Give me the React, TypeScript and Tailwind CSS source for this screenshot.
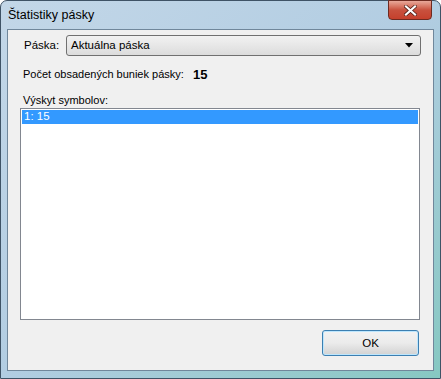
const font = { fontFamily: '"Liberation Sans", Arial, sans-serif' };

export default function App() {
  return (
    <div
      className="w-[441px] h-[379px] overflow-hidden bg-white"
      style={font}
    >
      <div className="relative flex h-full w-full flex-col rounded-t-[7px] border border-[#3f5366] bg-gradient-to-br from-[#c3d7e8] via-[#b2cde2] to-[#86c8c2]">
        {/* title bar */}
        <div className="flex h-[28px] shrink-0 items-center pl-[7px] text-[12.5px] text-black">
          Štatistiky pásky
        </div>

        <div className="absolute right-[8px] top-[-1px] flex h-[20px] w-[44px] items-center justify-center rounded-b-[4px] border border-[#6e2a20] bg-gradient-to-b from-[#e8a89a] via-[#c9513e] to-[#c5402c]">
          <svg width="13" height="11" viewBox="0 0 13 11">
            <path
              d="M2 1.5 L11 9.5 M11 1.5 L2 9.5"
              stroke="#4a1a12"
              strokeWidth="3.6"
              strokeLinecap="square"
            />
            <path
              d="M2 1.5 L11 9.5 M11 1.5 L2 9.5"
              stroke="#ffffff"
              strokeWidth="2.2"
              strokeLinecap="square"
            />
          </svg>
        </div>

        {/* client area */}
        <div className="mx-[6px] flex flex-1 flex-col border border-[#70879b] bg-[#f0f0f0] px-[12px] pt-[5px] text-[11px] leading-[13px] text-black">
          <div className="flex items-center">
            <span className="w-[46px] whitespace-nowrap pl-[4px] text-[11.5px]">Páska:</span>
            <div className="flex h-[21px] w-[355px] items-center justify-between rounded-[3px] border border-[#707070] bg-gradient-to-b from-[#f2f2f2] to-[#dcdcdc] pl-[4px] pr-[7px] text-[11.5px]">
              <span>Aktuálna páska</span>
              <svg width="8" height="5" viewBox="0 0 8 5">
                <path d="M0 0 H8 L4 4.5 Z" fill="#000" />
              </svg>
            </div>
          </div>

          <div className="mt-[12px] flex items-center pl-[3px]">
            <span className="w-[170px] whitespace-nowrap">Počet obsadených buniek pásky:</span>
            <span className="text-[13px] font-bold">15</span>
          </div>

          <div className="mt-[13px] whitespace-nowrap pl-[3px]">Výskyt symbolov:</div>

          <div className="mt-[1px] h-[212px] w-[400px] shrink-0 border border-[#828790] bg-white p-[1px]">
            <div className="flex h-[14px] items-center bg-[#3399ff] pl-[2px] text-[11.5px] leading-none text-white">
              1: 15
            </div>
          </div>

          <div className="mt-[10px] flex justify-end pr-[2px]">
            <div className="flex h-[26px] w-[97px] items-center justify-center rounded-[3px] border border-[#3c7fb1] bg-gradient-to-b from-[#f2f2f2] via-[#ebebeb] to-[#d2d2d2] text-[11.5px] shadow-[inset_0_0_0_1px_#bde6fd]">
              OK
            </div>
          </div>
        </div>
        <div className="h-[7px] shrink-0" />
      </div>
    </div>
  );
}
